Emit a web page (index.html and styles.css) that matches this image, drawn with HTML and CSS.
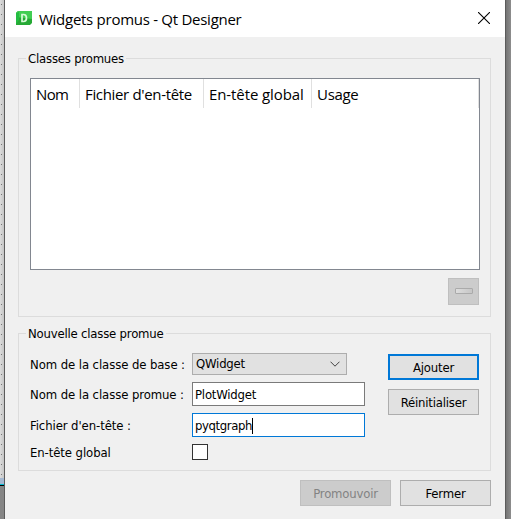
FILE: index.html
```html
<!DOCTYPE html>
<html lang="fr">
<head>
<meta charset="utf-8">
<title>Widgets promus - Qt Designer</title>
<link rel="stylesheet" href="styles.css">
</head>
<body>
<div class="desktop">
  <div class="canvas-edge"><div class="dots"></div><div class="strip"></div></div>
  <main class="dialog">
    <header class="titlebar">
      <svg class="logo" width="16" height="14" viewBox="0 0 16 14"><path d="M2 0H16V12L14 14H0V2Z" fill="#26a935"/><path d="M2 0H16V8L0 6V2Z" fill="#41cd52"/><path d="M0 2L3 1V9L0 13Z" fill="#24bd42"/><path d="M6 3.5H7.5Q10.5 3.5 10.5 7T7.5 10.5H6Z" fill="none" stroke="#d9fbd9" stroke-width="1.7"/></svg>
      <h1>Widgets promus - Qt Designer</h1>
      <svg class="close" width="12" height="12" viewBox="0 0 12 12"><path d="M0 0L12 12M12 0L0 12" stroke="#000" stroke-width="1.1"/></svg>
    </header>
    <section class="group promoted">
      <h2><span>Classes promues</span></h2>
      <div class="table">
        <div class="col name"><span>Nom</span></div>
        <div class="col file"><span>Fichier d'en-tête</span></div>
        <div class="col global"><span>En-tête global</span></div>
        <div class="col usage"><span>Usage</span></div>
      </div>
      <button class="remove" disabled aria-label="Supprimer"><i></i></button>
    </section>
    <section class="group new">
      <h2><span>Nouvelle classe promue</span></h2>
      <div class="body">
        <div class="form">
          <label class="base"><span>Nom de la classe de base :</span></label>
          <div class="combo"><span>QWidget</span><svg width="10" height="6" viewBox="0 0 10 6"><path d="M.5 .7L5 5.2L9.5 .7" fill="none" stroke="#404040"/></svg></div>
          <label class="class"><span>Nom de la classe promue :</span></label>
          <div class="input plot"><span>PlotWidget</span></div>
          <label class="header"><span>Fichier d'en-tête :</span></label>
          <div class="input focus"><span>pyqtgraph</span><b class="caret"></b></div>
          <label class="glob"><span>En-tête global</span></label>
          <div class="check"></div>
        </div>
        <div class="actions">
          <button class="primary"><span>Ajouter</span></button>
          <button><span>Réinitialiser</span></button>
        </div>
      </div>
    </section>
    <footer>
      <button disabled><span>Promouvoir</span></button>
      <button><span>Fermer</span></button>
    </footer>
  </main>
  <div class="shade"></div>
</div>
</body>
</html>
```
FILE: styles.css
```css
* { box-sizing: border-box; }
body { margin: 0; overflow: hidden; font: 13px/18px "DejaVu Sans Condensed", "Noto Sans", sans-serif; letter-spacing: -0.2px; color: #000; }
h1, h2 { margin: 0; font-weight: 400; }
span { white-space: nowrap; }
.desktop { display: flex; width: 511px; height: 519px; }
.canvas-edge { width: 4px; background: #858585; }
.dots { height: 478px; background: radial-gradient(circle at 1.5px 4.5px, #777 0.6px, transparent 0.8px) 0 0 / 10px 10px, linear-gradient(90deg, #dcdcdc, #c5c5c5); }
.strip { height: 8px; background: #a4b8d1; border-bottom: 1px solid #000; box-shadow: inset 0 -1px #00bcd4; }
.shade { width: 5px; background: linear-gradient(90deg, #747474, #8d8d8d); }
.dialog { width: 502px; background: #f0f0f0; border: solid #5b5b5b; border-width: 0 1px; }
.titlebar { display: flex; align-items: center; height: 37px; padding: 0 15px 0 11px; background: #fff; }
.logo { margin-top: -1px; }
.titlebar h1 { margin: 0 0 0 7px; font: 15px/22px "Open Sans", sans-serif; letter-spacing: -0.27px; }
.close { margin-left: auto; margin-top: -1px; }
.group { width: 473px; margin-left: 13px; border: 1px solid #dcdcdc; }
.group h2 { width: max-content; height: 18px; margin: -9px 0 0 7px; padding: 0 2px; background: #f0f0f0; font-size: 13px; }
.promoted { height: 259px; margin-top: 21px; }
.table { display: flex; width: 450px; height: 192px; margin: 10px 0 0 11px; background: #fff; border: 1px solid #828790; }
.col { height: 29px; padding: 4px 0 0 5px; border-right: 1px solid #e0e0e0; font: 15px/22px "Open Sans", sans-serif; letter-spacing: -0.1px; }
.name { width: 49px; letter-spacing: -0.6px; }
.file { width: 124px; letter-spacing: -0.34px; }
.global { width: 108px; }
.usage { width: 167px; letter-spacing: -0.3px; }
button { display: flex; align-items: center; justify-content: center; width: 91px; height: 26px; padding: 1px 0 0; border: 1px solid #adadad; background: #e1e1e1; color: #000; font: inherit; letter-spacing: inherit; }
button:disabled { background: #ccc; border-color: #bfbfbf; color: #838383; }
.primary { border: 2px solid #0078d7; }
.remove { width: 31px; height: 27px; margin: 8px 0 0 429px; }
.remove i { width: 18px; height: 6px; margin-top: -2px; border: 1px solid #aaa; border-radius: 1px; background: linear-gradient(90deg, #ddd, #c6c6c6); }
.new { height: 138px; margin-top: 16px; }
.body { display: flex; margin-left: 11px; padding-top: 10px; }
.form { display: grid; grid-template-columns: 162px 173px; grid-template-rows: 22px 24px 24px 16px; row-gap: 7px; align-items: center; width: 335px; }
.form label { padding-top: 1px; letter-spacing: -0.09px; }
.combo { display: flex; align-items: center; justify-content: space-between; width: 155px; height: 22px; padding: 0 6px 0 3px; border: 1px solid #adadad; background: #e1e1e1; }
.input { display: flex; align-items: center; height: 24px; padding: 1px 0 0 2px; border: 1px solid #7a7a7a; background: #fff; }
.focus { border-color: #0078d7; letter-spacing: -0.4px; }
.caret { width: 1px; height: 16px; background: #000; }
.check { width: 16px; height: 16px; border: 1px solid #333; background: #fff; }
.actions { display: flex; flex-direction: column; gap: 9px; margin: 1px 0 0 23px; }
footer { display: flex; gap: 9px; margin: 9px 0 0 295px; }
```
